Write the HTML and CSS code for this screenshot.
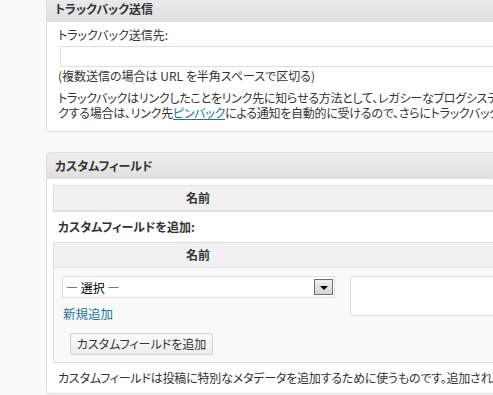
FILE: index.html
```html
<!DOCTYPE html>
<html lang="ja">
<head>
<meta charset="utf-8">
<link rel="stylesheet" href="styles.css">
</head>
<body>
<div class="wrap">
  <section class="panel panel-first">
    <h3 class="panel-head">トラックバック送信</h3>
    <div class="panel-body">
      <div class="label">トラックバック送信先:</div>
      <div class="input"></div>
      <div class="note">(複数送信の場合は URL を半角スペースで区切る)</div>
      <p class="desc">トラックバックはリンクしたことをリンク先に知らせる方法として、レガシーなブログシステムへリンクする際に使います。</p>
      <p class="desc">クする場合は、リンク先<a href="#" class="link">ピンバック</a>による通知を自動的に受けるので、さらにトラックバックを送る必要はありません。</p>
    </div>
  </section>

  <section class="panel panel-second">
    <h3 class="panel-head">カスタムフィールド</h3>
    <div class="panel-body2">
      <div class="tbl">
        <div class="th">名前</div>
        <div class="th"></div>
      </div>
      <div class="subtitle">カスタムフィールドを追加:</div>
      <div class="tbl">
        <div class="th">名前</div>
        <div class="th"></div>
        <div class="td td-first">
          <div class="select"><span class="select-text">— 選択 —</span><span class="select-btn"><span class="tri"></span></span></div>
          <a href="#" class="newlink">新規追加</a>
          <div class="btn-row"><span class="button">カスタムフィールドを追加</span></div>
        </div>
        <div class="td td-second">
          <div class="textarea"></div>
        </div>
      </div>
      <p class="foot">カスタムフィールドは投稿に特別なメタデータを追加するために使うものです。追加されたデータはテーマで利用できます。</p>
    </div>
  </section>
</div>
</body>
</html>
```

FILE: styles.css
```css
html, body {
  margin: 0;
  padding: 0;
  background: #f9f9f9;
  overflow: hidden;
}
body {
  font-family: "Noto Sans CJK JP", "Noto Sans", sans-serif;
  font-size: 12px;
  line-height: 15px;
  color: #333;
  font-feature-settings: "palt";
}
.wrap {
  width: 760px;
  padding-left: 46px;
  display: flex;
  flex-direction: column;
  gap: 20px;
}
.panel {
  background: #fff;
  border: 1px solid #dfdfdf;
  border-radius: 4px;
}
.panel-first {
  margin-top: -5px;
}
.panel-head {
  margin: 0;
  height: 26px;
  line-height: 26px;
  padding-left: 8px;
  font-size: 12px;
  font-weight: bold;
  color: #333;
  background: linear-gradient(#eeeeee, #dfdfdf);
  border-radius: 4px 4px 0 0;
}
.panel-first .panel-head {
  margin-top: -4px;
  height: 30px;
  line-height: 34px;
  border-radius: 0;
}
.panel-body {
  padding: 5px 11px 11px 11px;
}
.label {
  height: 15px;
}
.input {
  margin: 4px 0 0 2px;
  height: 21px;
  box-sizing: border-box;
  border: 1px solid #dfdfdf;
  background: #fff;
}
.note {
  margin-top: 1px;
}
.desc {
  margin: 0;
  white-space: nowrap;
  letter-spacing: -0.25px;
}
.note + .desc {
  margin-top: 7px;
}
.link {
  color: #21759b;
  text-decoration: underline;
}
.panel-body2 {
  padding: 6px 6px 8px 6px;
}
.tbl {
  display: grid;
  grid-template-columns: 288px 1fr;
  border: 1px solid #dfdfdf;
  border-right: none;
}
.th {
  height: 24px;
  line-height: 24px;
  background: #f1f1f1;
  text-align: center;
  font-weight: bold;
  color: #333;
  border-bottom: 1px solid #dfdfdf;
}
.subtitle {
  font-weight: bold;
  padding: 7px 5px 8px 5px;
}
.td {
  background: #f9f9f9;
  padding: 8px 8px 7px 8px;
}
.td-first {
  display: flex;
  flex-direction: column;
}
.select {
  width: 273px;
  height: 22px;
  box-sizing: border-box;
  border: 1px solid #dfdfdf;
  background: #fff;
  display: flex;
  align-items: center;
  justify-content: space-between;
  padding: 0 1px 0 3px;
  color: #000;
}
.select-btn {
  width: 19px;
  height: 16px;
  box-sizing: border-box;
  border: 1px solid #707070;
  background: linear-gradient(#f0f0f0, #d4d4d4);
  display: flex;
  align-items: center;
  justify-content: center;
}
.tri {
  width: 0;
  height: 0;
  border-left: 4px solid transparent;
  border-right: 4px solid transparent;
  border-top: 4px solid #000;
  margin-top: 1px;
}
.newlink {
  margin-top: 8px;
  padding-left: 1px;
  color: #21759b;
  text-decoration: none;
  font-size: 12.5px;
  align-self: flex-start;
}
.btn-row {
  margin-top: 12px;
  padding-left: 8px;
}
.button {
  display: inline-block;
  width: 143px;
  height: 22px;
  box-sizing: border-box;
  line-height: 20px;
  text-align: center;
  border: 1px solid #cfcfcf;
  border-radius: 2px;
  background: linear-gradient(#fafafa, #eeeeee);
  color: #333;
}
.td-second {
  padding-left: 8px;
}
.textarea {
  height: 40px;
  box-sizing: border-box;
  border: 1px solid #dfdfdf;
  background: #fff;
}
.foot {
  margin: 7px 0 0 5px;
  white-space: nowrap;
  letter-spacing: -0.2px;
}
```
